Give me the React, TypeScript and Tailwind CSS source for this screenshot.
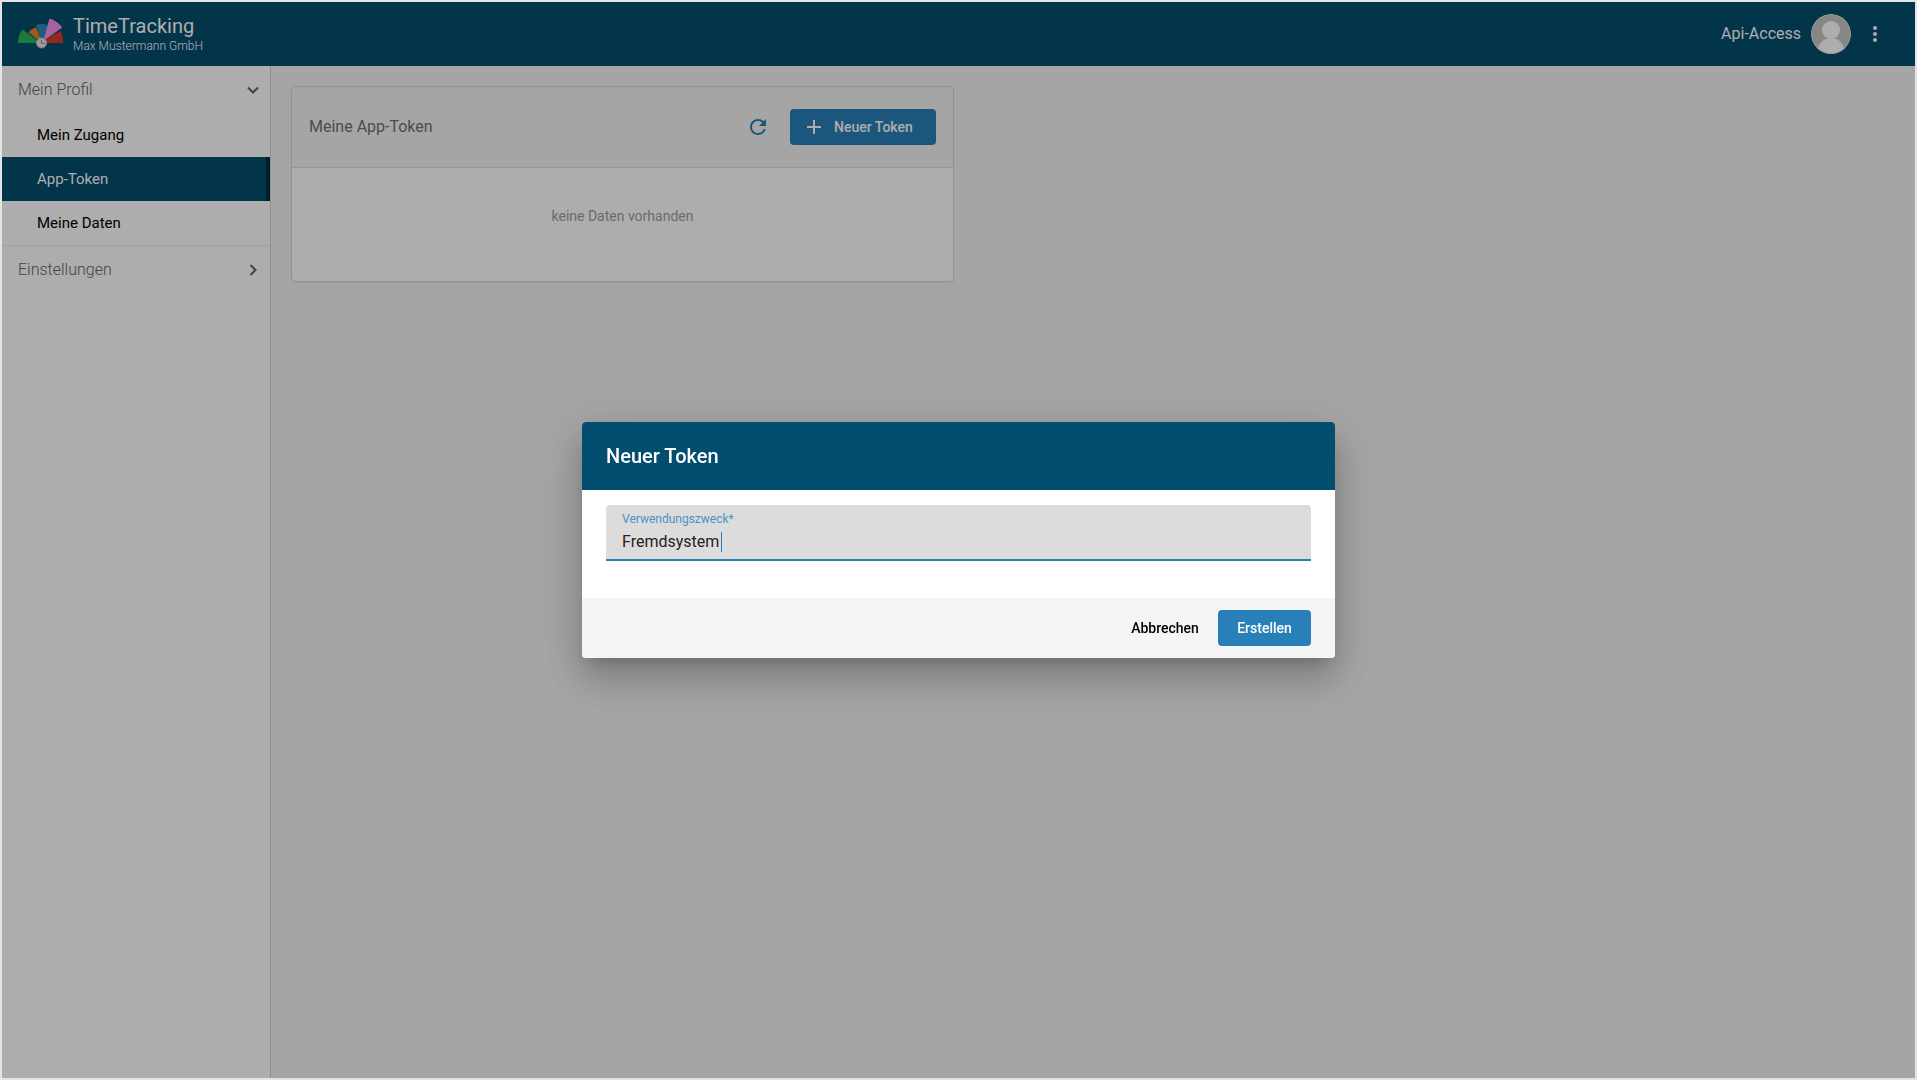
import { useState } from "react";
import { MdAdd, MdMoreVert, MdRefresh } from "react-icons/md";

const profileItems = [
  { label: "Mein Zugang", active: false },
  { label: "App-Token", active: true },
  { label: "Meine Daten", active: false },
];

function Logo() {
  return (
    <svg viewBox="0 0 46 32" className="h-8 w-[46px]" aria-hidden="true">
      <path d="M0 25C0 19.500 1.600 15 4.500 11.500L19 22L18 25Z" fill="#2bb35c" />
      <path d="M10.500 14.500C12.500 12 15 10.200 18 9.200L22.500 20L20 22Z" fill="#e8861d" />
      <path d="M18 7C22 5.600 26 5.600 30 7L25.500 20.500H22.500Z" fill="#2b88bd" />
      <path d="M31.500 0.500C37 2 41 5 44.300 9.500L27.500 21.500L25.800 20.500Z" fill="#f993e6" />
      <path d="M42.500 13C44.500 16.500 45.200 20.500 45 25H28L27 21.800Z" fill="#df382f" />
      <circle cx="23.500" cy="25" r="5" fill="#e6e6e6" stroke="#c4c4c4" />
      <path d="M23.500 21.800V25.300H26.500" fill="none" stroke="#8a8a8a" strokeWidth="1" />
    </svg>
  );
}

function Avatar() {
  return (
    <svg viewBox="0 0 40 40" className="size-10 rounded-full" aria-hidden="true">
      <circle cx="20" cy="20" r="20" fill="#c6c6c6" />
      <circle cx="20" cy="16" r="9" fill="#fff" />
      <path d="M6.500 34.800C9 28 13.500 24 20 24S31 28 33.500 34.800A20 20 0 0 1 6.500 34.800Z" fill="#fff" />
      <circle cx="20" cy="20" r="19.500" fill="none" stroke="#dedede" />
    </svg>
  );
}

function Chevron({ open }: { open: boolean }) {
  return (
    <svg viewBox="0 0 12 12" className={open ? "size-3" : "size-3 -rotate-90"} aria-hidden="true">
      <path d="M1 3.500L6 8.500L11 3.500" fill="none" stroke="#616161" strokeWidth="2" />
    </svg>
  );
}

function TopBar() {
  return (
    <header className="flex h-16 shrink-0 items-center justify-between bg-[#034d6e] pr-7 pl-4 text-white">
      <div className="flex items-center gap-[9px]">
        <Logo />
        <div>
          <div className="text-xl leading-6">TimeTracking</div>
          <div className="text-xs leading-4 font-light">Max Mustermann GmbH</div>
        </div>
      </div>
      <div className="flex items-center">
        <span className="mr-2.5 text-base">Api-Access</span>
        <Avatar />
        <button type="button" aria-label="Menü" className="ml-3">
          <MdMoreVert className="size-6" />
        </button>
      </div>
    </header>
  );
}

function Sidebar() {
  return (
    <nav className="w-[269px] shrink-0 border-r border-[#d6d6d6] bg-white">
      <button
        type="button"
        className="flex h-[47px] w-full items-center justify-between pr-[11px] pl-4 text-base font-light text-[#666]"
      >
        Mein Profil
        <Chevron open />
      </button>
      <ul className="border-b border-[#ececec]">
        {profileItems.map((item) => (
          <li key={item.label}>
            <a
              href="#"
              className={
                item.active
                  ? "flex h-11 items-center border-r-4 border-[#022c3f] bg-[#034d6e] pl-[35px] text-[15px] text-white"
                  : "flex h-11 items-center pl-[35px] text-[15px] text-black"
              }
            >
              {item.label}
            </a>
          </li>
        ))}
      </ul>
      <button
        type="button"
        className="flex h-12 w-full items-center justify-between pr-[11px] pl-4 text-base font-light text-[#666]"
      >
        Einstellungen
        <Chevron open={false} />
      </button>
    </nav>
  );
}

function TokenCard() {
  return (
    <section className="max-w-[663px] overflow-hidden rounded border border-[#d6d6d6] bg-white shadow-xs">
      <div className="flex h-[81px] items-center justify-between border-b border-[#dedede] bg-[#f4f4f4] px-[17px]">
        <h2 className="text-base text-[#707070]">Meine App-Token</h2>
        <div className="flex items-center gap-5">
          <button type="button" aria-label="Aktualisieren" className="text-[#2980b9]">
            <MdRefresh className="size-6" />
          </button>
          <button
            type="button"
            className="flex h-9 w-[146px] items-center gap-2 rounded bg-[#2980b9] px-3 text-sm font-medium text-white"
          >
            <MdAdd className="size-6" />
            Neuer Token
          </button>
        </div>
      </div>
      <p className="pt-[38px] pb-[55px] text-center text-sm leading-5 text-[#9e9e9e]">keine Daten vorhanden</p>
    </section>
  );
}

function NewTokenDialog() {
  const [purpose, setPurpose] = useState("Fremdsystem");

  return (
    <div className="fixed inset-0.5 flex items-center justify-center bg-black/32">
      <form
        role="dialog"
        aria-labelledby="dialog-title"
        className="w-full max-w-[753px] overflow-hidden rounded bg-white shadow-[0_11px_15px_-7px_rgba(0,0,0,0.2),0_24px_38px_3px_rgba(0,0,0,0.14),0_9px_46px_8px_rgba(0,0,0,0.12)]"
      >
        <h2 id="dialog-title" className="flex h-[68px] items-center bg-[#034d6e] px-6 text-xl font-medium text-white">
          Neuer Token
        </h2>
        <div className="px-6 pt-[15px] pb-[37px]">
          <div className="relative flex h-14 flex-col rounded-t border-b-2 border-[#2980b9] bg-[#dcdcdc] px-4 pt-1.5">
            <label htmlFor="purpose" className="text-xs leading-4 text-[#4a93c4]">
              Verwendungszweck*
            </label>
            <input
              id="purpose"
              type="text"
              value={purpose}
              onChange={(e) => setPurpose(e.target.value)}
              className="h-7 w-full bg-transparent text-base text-[#212121] caret-transparent outline-none"
            />
            <span className="absolute top-[27px] left-[115px] h-5 w-px bg-[#2980b9]" />
          </div>
        </div>
        <div className="flex h-[60px] items-center justify-end gap-2 bg-[#f4f4f4] px-6 text-sm font-medium">
          <button type="button" className="h-9 w-[90px] text-black">
            Abbrechen
          </button>
          <button type="submit" className="h-9 w-[93px] rounded bg-[#2980b9] text-white">
            Erstellen
          </button>
        </div>
      </form>
    </div>
  );
}

export default function App() {
  return (
    <div className="flex min-h-screen flex-col border-2 border-[#e4e4e4] bg-[#f4f4f4] font-[Roboto,sans-serif]">
      <TopBar />
      <div className="flex grow">
        <Sidebar />
        <main className="grow p-5">
          <TokenCard />
        </main>
      </div>
      <NewTokenDialog />
    </div>
  );
}
